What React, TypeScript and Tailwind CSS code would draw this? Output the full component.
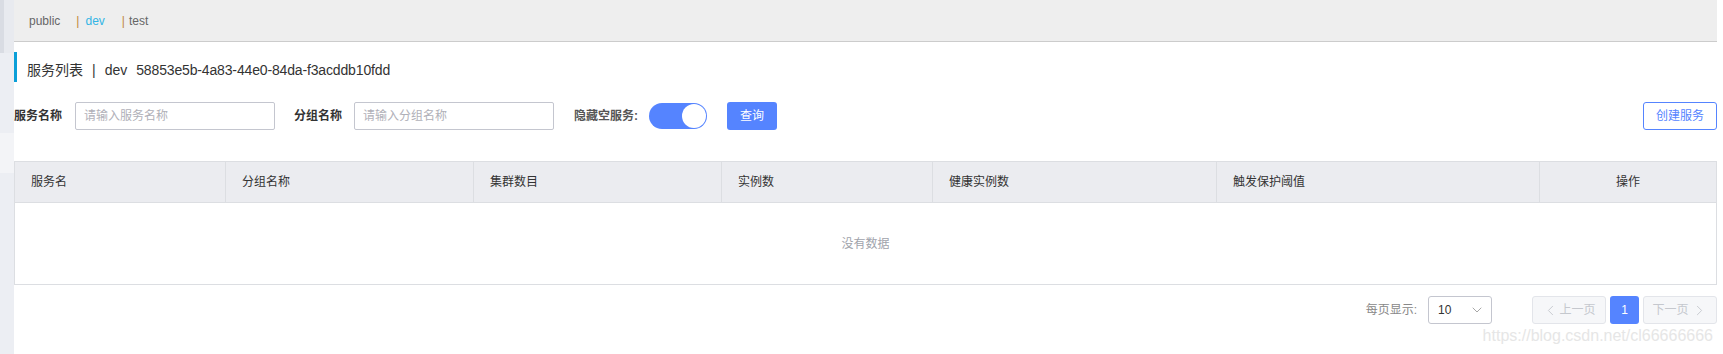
import { ChevronDown, ChevronLeft, ChevronRight } from "lucide-react";

const FONT = { fontFamily: '"Liberation Sans", "Noto Sans CJK SC", sans-serif' };

const COLUMNS = [
  { label: "服务名", center: false },
  { label: "分组名称", center: false },
  { label: "集群数目", center: false },
  { label: "实例数", center: false },
  { label: "健康实例数", center: false },
  { label: "触发保护阈值", center: false },
  { label: "操作", center: true },
];

function NamespaceBar() {
  return (
    <div className="flex h-[42px] items-center border-b border-[#cccccc] bg-[#eeeeee] pl-[15px] text-[12px] text-[#666666]">
      <span>public</span>
      <span className="ml-[16px] text-[#c0883b]">|</span>
      <span className="ml-[6px] text-[#33b5e5]">dev</span>
      <span className="ml-[17px] text-[#c0883b]">|</span>
      <span className="ml-[4px]">test</span>
    </div>
  );
}

function Filters() {
  return (
    <div className="mt-[20px] flex h-[28px] items-center text-[12px]">
      <span className="font-bold text-[#333333]">服务名称</span>
      <input
        placeholder="请输入服务名称"
        className="ml-[13px] h-[28px] w-[200px] rounded-[2px] border border-[#c4c6cf] px-[8px] text-[12px] outline-none placeholder:text-[#b0b0b8]"
      />
      <span className="ml-[19px] font-bold text-[#333333]">分组名称</span>
      <input
        placeholder="请输入分组名称"
        className="ml-[12px] h-[28px] w-[200px] rounded-[2px] border border-[#c4c6cf] px-[8px] text-[12px] outline-none placeholder:text-[#b0b0b8]"
      />
      <span className="ml-[20px] font-bold text-[#555555]">隐藏空服务:</span>
      <div className="ml-[11px] flex h-[26px] w-[58px] items-center justify-end rounded-full bg-[#5584ff] p-[1px]">
        <div className="h-[24px] w-[24px] rounded-full bg-white" />
      </div>
      <button className="ml-[20px] h-[28px] w-[50px] rounded-[3px] bg-[#5584ff] text-[12px] text-white">
        查询
      </button>
      <button className="ml-auto h-[28px] w-[74px] rounded-[3px] border border-[#5584ff] bg-white text-[12px] text-[#5584ff]">
        创建服务
      </button>
    </div>
  );
}

function ServiceTable() {
  return (
    <div className="mt-[31px] border border-[#dcdee2] text-[12px]">
      <div className="grid h-[41px] grid-cols-[211px_248px_248px_211px_284px_323px_1fr] border-b border-[#dcdee2] bg-[#ebecf0] text-[#333333]">
        {COLUMNS.map((c, i) => (
          <div
            key={c.label}
            className={
              (i < COLUMNS.length - 1 ? "border-r border-[#dcdee2] " : "") +
              (c.center ? "flex items-center justify-center" : "flex items-center pl-[16px]")
            }
          >
            {c.label}
          </div>
        ))}
      </div>
      <div className="flex h-[81px] items-center justify-center text-[#a0a3ab]">没有数据</div>
    </div>
  );
}

function Pagination() {
  return (
    <div className="mt-[11px] flex h-[28px] items-center justify-end text-[12px]">
      <span className="text-[#888888]">每页显示:</span>
      <div className="ml-[11px] flex h-[28px] w-[64px] items-center justify-between rounded-[3px] border border-[#c4c6cf] pl-[9px] pr-[6px] text-[#333333]">
        <span>10</span>
        <ChevronDown size={16} strokeWidth={1.3} className="text-[#999999]" />
      </div>
      <button className="ml-[40px] flex h-[28px] w-[74px] items-center justify-center rounded-[3px] border border-[#e3e5ea] bg-[#f6f7f9] text-[#c5c8ce]">
        <ChevronLeft size={17} strokeWidth={1.3} />
        <span>上一页</span>
      </button>
      <button className="ml-[4px] h-[28px] w-[29px] rounded-[3px] bg-[#5584ff] text-white">1</button>
      <button className="ml-[4px] flex h-[28px] w-[74px] items-center justify-center rounded-[3px] border border-[#e3e5ea] bg-[#f6f7f9] text-[#c5c8ce]">
        <span className="mr-[2px]">下一页</span>
        <ChevronRight size={17} strokeWidth={1.3} />
      </button>
    </div>
  );
}

export default function App() {
  return (
    <div className="flex min-h-[354px] bg-white" style={FONT}>
      <div className="flex w-[14px] flex-col">
        <div className="flex h-[53px]">
          <div className="w-[4px] bg-[#d9dce3]" />
          <div className="flex-1 bg-[#e8eaef]" />
        </div>
        <div className="h-[80px] bg-[#eceef3]" />
        <div className="h-[40px] bg-[#f3f4f7]" />
        <div className="flex-1 bg-[#eceef3]" />
      </div>
      <div className="mr-[6px] flex-1">
        <NamespaceBar />
        <div className="mt-[10px] flex h-[30px] items-center">
          <div className="h-[30px] w-[3px] bg-[#0b9fd8]" />
          <div className="ml-[10px] flex items-center pt-[6px] text-[14px] text-[#333333]">
            <span>服务列表</span>
            <span className="ml-[9px]">|</span>
            <span className="ml-[9px]">dev</span>
            <span className="ml-[9px] tracking-[-0.15px]">58853e5b-4a83-44e0-84da-f3acddb10fdd</span>
          </div>
        </div>
        <Filters />
        <ServiceTable />
        <Pagination />
        <div className="mt-[3px] flex justify-end pr-[4px] text-[16px] leading-[18px] text-[#e6e6e6]">
          https://blog.csdn.net/cl66666666
        </div>
      </div>
    </div>
  );
}
